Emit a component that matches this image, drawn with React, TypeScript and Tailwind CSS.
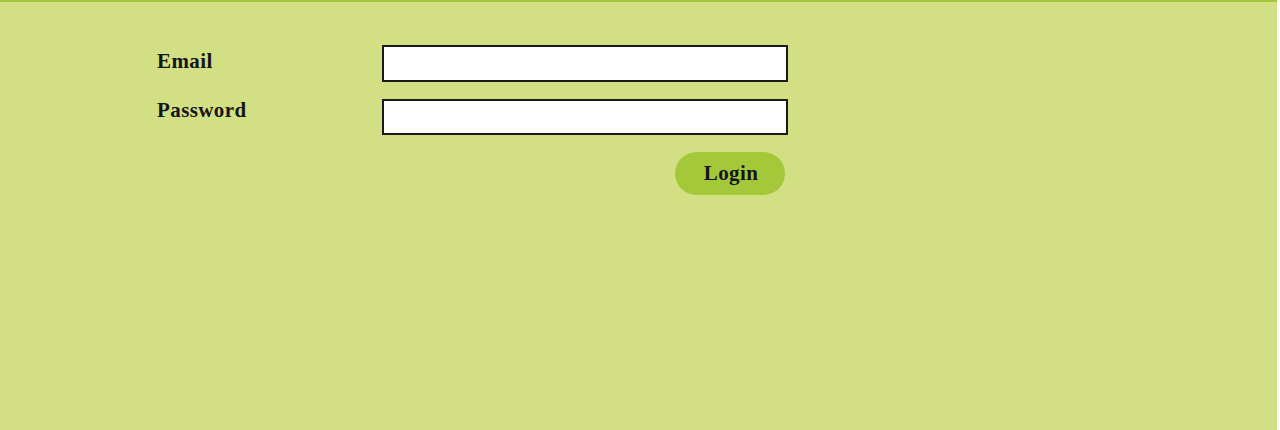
export default function App() {
    return (
        <div className="h-[430px] w-full bg-white">
            <div className="flex h-[430px] w-[1277px] border-t-2 border-[#a6c63c] bg-[#d2e083] pl-[157px] pt-[43px] font-['Liberation_Serif',serif] text-[#161616]">
                <div className="flex w-[225px] flex-col gap-[25px] pt-[4px] text-[21px] font-bold leading-[24px] tracking-[0.4px]">
                    <label htmlFor="email">Email</label>
                    <label htmlFor="password">Password</label>
                </div>
                <div className="flex w-[406px] flex-col">
                    <input
                        id="email"
                        type="email"
                        className="h-[37px] w-full border-2 border-[#1a1a1a] bg-white px-2 outline-none"
                    />
                    <input
                        id="password"
                        type="password"
                        className="mt-[17px] h-[36px] w-full border-2 border-[#1a1a1a] bg-white px-2 outline-none"
                    />
                    <button className="mr-[3px] mt-[17px] h-[43px] w-[110px] self-end rounded-full bg-[#a4c83a] pl-[2px] text-[21px] font-bold leading-none tracking-[0.4px] text-[#161616]">
                        Login
                    </button>
                </div>
            </div>
        </div>
    )
}
